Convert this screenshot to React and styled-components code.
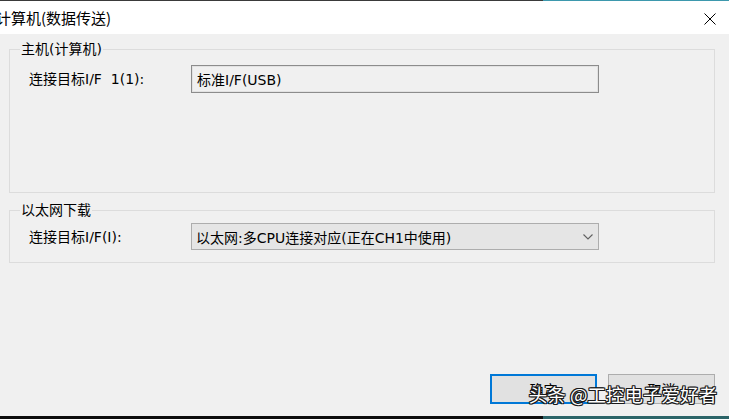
import React from 'react';
import styled, { createGlobalStyle } from 'styled-components';

const GlobalStyle = createGlobalStyle`
  html, body {
    margin: 0;
    padding: 0;
    background: #f0f0f0;
  }
  body {
    font-family: "Noto Sans CJK SC", "Noto Sans", sans-serif;
    color: #000;
  }
`;

// 대화상자 본문 글꼴: 영문은 넓은 글꼴, 한자는 CJK 글꼴
const uiFont = `"DejaVu Sans", "Noto Sans CJK SC", sans-serif`;

const Window = styled.div`
  width: 729px;
  height: 419px;
  display: flex;
  flex-direction: column;
  overflow: hidden;
`;

// 창 위/아래 테두리 (작업표시줄 색 비침)
const Edge = styled.div`
  height: ${(p) => p.h}px;
  display: flex;
`;

const EdgePart = styled.div`
  background: ${(p) => p.color};
  width: ${(p) => (p.w ? `${p.w}px` : 'auto')};
  flex: ${(p) => (p.w ? 'none' : 1)};
`;

const TitleBar = styled.div`
  height: 33px;
  background: #fff;
  display: flex;
  align-items: center;
  justify-content: space-between;
  padding-right: 13px;
`;

const TitleText = styled.span`
  margin-left: -4px;
  font-size: 15px;
  line-height: 20px;
  margin-top: 1px;
`;

const CloseButton = styled.svg`
  width: 12px;
  height: 12px;
  margin-top: 2px;
`;

const Body = styled.div`
  position: relative;
  flex: 1;
  background: #f0f0f0;
  padding: 6px 14px 0 9px;
  display: flex;
  flex-direction: column;
  font-family: ${uiFont};
`;

const Group = styled.fieldset`
  box-sizing: border-box;
  margin: 0 0 ${(p) => p.gap || 0}px;
  padding: 0 0 0 10px;
  height: ${(p) => p.height}px;
  border: 1px solid #dcdcdc;
  min-inline-size: 0;
`;

const Legend = styled.legend`
  padding: 0 1px;
  font-size: 14px;
  line-height: 18px;
`;

const Row = styled.div`
  display: flex;
  align-items: center;
  margin: ${(p) => p.top}px 0 0 9px;
`;

const Label = styled.span`
  width: 162px;
  font-size: 14px;
  line-height: 18px;
`;

const TextBox = styled.div`
  box-sizing: border-box;
  width: 408px;
  height: 28px;
  border: 1px solid #8c8c8c;
  box-shadow: inset 0 0 0 1px #e2e2e2;
  background: #f0f0f0;
  padding-left: 5px;
  display: flex;
  align-items: center;
  font-size: 14px;
`;

const Combo = styled.div`
  box-sizing: border-box;
  width: 408px;
  height: 27px;
  border: 1px solid #adadad;
  background: #e5e5e5;
  padding: 0 5px 0 4px;
  display: flex;
  align-items: center;
  justify-content: space-between;
  font-size: 14px;
`;

const Chevron = styled.svg`
  width: 10px;
  height: 6px;
`;

const ButtonRow = styled.div`
  margin-top: auto;
  display: flex;
  justify-content: flex-end;
  gap: 11px;
  padding-bottom: 12px;
`;

const Button = styled.div`
  box-sizing: border-box;
  width: ${(p) => p.w}px;
  height: 30px;
  border: ${(p) => (p.primary ? '2px solid #0078d7' : '1px solid #adadad')};
  background: #e1e1e1;
  display: flex;
  align-items: center;
  justify-content: center;
  font-family: "Noto Sans CJK SC", sans-serif;
  font-size: 14px;
`;

const Watermark = styled.div`
  position: absolute;
  right: 12px;
  bottom: 10px;
  font-family: "Noto Sans CJK SC", sans-serif;
  font-size: 18.5px;
  line-height: 24px;
  color: #fff;
  white-space: pre;
  text-shadow:
    1px 0 0 #1a1a1a, -1px 0 0 #1a1a1a, 0 1px 0 #1a1a1a, 0 -1px 0 #1a1a1a,
    1px 1px 0 #1a1a1a, -1px -1px 0 #1a1a1a, 1px -1px 0 #1a1a1a, -1px 1px 0 #1a1a1a;
`;

function App() {
  return (
    <>
      <GlobalStyle />
      <Window>
        <Edge h={1}>
          <EdgePart w={543} color="#3a3a3a" />
          <EdgePart color="#3d98ad" />
        </Edge>
        <TitleBar>
          <TitleText>计算机(数据传送)</TitleText>
          <CloseButton viewBox="0 0 12 12">
            <path d="M0.5 0.5 L11.5 11.5 M11.5 0.5 L0.5 11.5" stroke="#000" strokeWidth="1" fill="none" />
          </CloseButton>
        </TitleBar>
        <Body>
          <Group height={153} gap={8}>
            <Legend>主机(计算机)</Legend>
            <Row top={7}>
              <Label>连接目标I/F&nbsp; 1(1):</Label>
              <TextBox>标准I/F(USB)</TextBox>
            </Row>
          </Group>
          <Group height={62}>
            <Legend>以太网下载</Legend>
            <Row top={4}>
              <Label>连接目标I/F(I):</Label>
              <Combo>
                <span>以太网:多CPU连接对应(正在CH1中使用)</span>
                <Chevron viewBox="0 0 10 6">
                  <path d="M0.5 0.5 L5 5 L9.5 0.5" stroke="#606060" strokeWidth="1.1" fill="none" />
                </Chevron>
              </Combo>
            </Row>
          </Group>
          <ButtonRow>
            <Button w={107} primary>确定</Button>
            <Button w={107}>取消</Button>
          </ButtonRow>
          <Watermark>头条 @工控电子爱好者</Watermark>
        </Body>
        <Edge h={3}>
          <EdgePart w={543} color="#0c0c0c" />
          <EdgePart color="#2b6468" />
        </Edge>
      </Window>
    </>
  );
}

export default App;
